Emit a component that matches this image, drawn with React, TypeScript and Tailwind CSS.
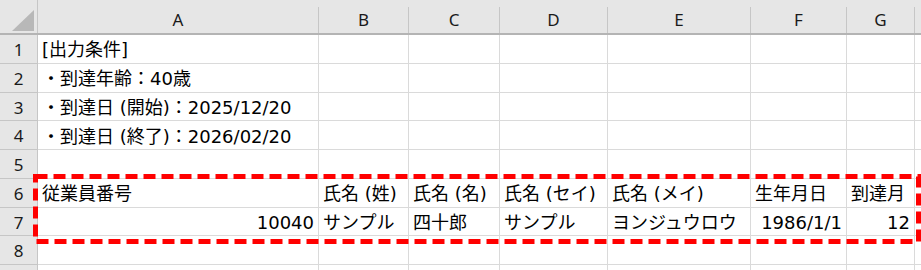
const COLS = [
  { key: 'A', w: 'w-[281px]' },
  { key: 'B', w: 'w-[90px]' },
  { key: 'C', w: 'w-[91px]' },
  { key: 'D', w: 'w-[108px]' },
  { key: 'E', w: 'w-[143px]' },
  { key: 'F', w: 'w-[96px]' },
  { key: 'G', w: 'w-[68px]' },
]

type Cell = { text: string; right?: boolean }

const ROWS: (Cell | null)[][] = [
  [{ text: '[出力条件]' }],
  [{ text: '・到達年齢：40歳' }],
  [{ text: '・到達日 (開始)：2025/12/20' }],
  [{ text: '・到達日 (終了)：2026/02/20' }],
  [],
  [
    { text: '従業員番号' },
    { text: '氏名 (姓)' },
    { text: '氏名 (名)' },
    { text: '氏名 (セイ)' },
    { text: '氏名 (メイ)' },
    { text: '生年月日' },
    { text: '到達月' },
  ],
  [
    { text: '10040', right: true },
    { text: 'サンプル' },
    { text: '四十郎' },
    { text: 'サンプル' },
    { text: 'ヨンジュウロウ' },
    { text: '1986/1/1', right: true },
    { text: '12', right: true },
  ],
  [],
  [],
]

const cellFont = { fontFamily: '"DejaVu Sans", "Noto Sans CJK JP", sans-serif' }
const headFont = { fontFamily: '"Noto Sans", sans-serif' }

function ColumnHeader() {
  return (
    <div className="flex h-[35px] bg-[#e6e6e6] border-b-2 border-[#b4b4b4]">
      {/* corner with the select-all triangle */}
      <div className="w-[38px] shrink-0 border-r border-[#c6c6c6] flex items-end justify-end pr-[3px] pb-[2px]">
        <svg width="22" height="21" viewBox="0 0 22 21">
          <polygon points="22,0 22,21 0,21" fill="#b8b8b8" />
        </svg>
      </div>
      {COLS.map(c => (
        <div
          key={c.key}
          className={`${c.w} shrink-0 mt-[7px] border-r border-[#c6c6c6] flex items-center justify-center text-[17px] text-[#1a1a1a]`}
          style={headFont}
        >
          {c.key}
        </div>
      ))}
      <div className="flex-1 mt-[7px]" />
    </div>
  )
}

function Row({ n, cells }: { n: number | null; cells: (Cell | null)[] }) {
  return (
    <div className="flex h-[28.75px] shrink-0">
      <div
        className="w-[38px] shrink-0 bg-[#e6e6e6] border-r border-b border-[#c6c6c6] flex items-center justify-center pt-[2px] text-[17px] text-[#1a1a1a]"
        style={headFont}
      >
        {n}
      </div>
      {COLS.map((c, i) => {
        const cell = cells[i]
        return (
          <div
            key={c.key}
            className={`${c.w} shrink-0 border-r border-b border-[#dadada] flex items-center whitespace-nowrap pt-[2px] text-[18px] text-black px-[4px] ${cell?.right ? 'justify-end' : ''}`}
            style={cellFont}
          >
            {cell?.text}
          </div>
        )
      })}
      <div className="flex-1 border-b border-[#dadada]" />
    </div>
  )
}

export default function App() {
  return (
    <div className="relative w-[921px] h-[270px] overflow-hidden bg-white">
      <ColumnHeader />
      {ROWS.map((cells, i) => (
        // the ninth row only peeks in at the bottom edge, so no number shows
        <Row key={i} n={i < 8 ? i + 1 : null} cells={cells} />
      ))}

      {/* red dashed highlight around the output table */}
      <svg className="absolute inset-0 pointer-events-none" width="921" height="270">
        <rect
          x="35.5"
          y="176.5"
          width="883"
          height="65"
          fill="none"
          stroke="#ff0000"
          strokeWidth="5"
          strokeDasharray="12 6"
        />
      </svg>
    </div>
  )
}
